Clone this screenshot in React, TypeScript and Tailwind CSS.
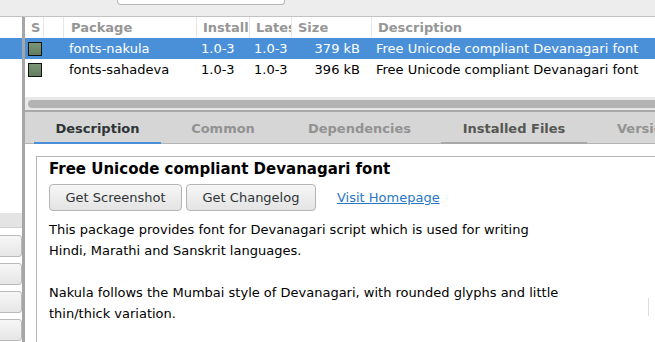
import React from 'react';

interface PkgRow {
  name: string;
  installed: string;
  latest: string;
  size: string;
  summary: string;
  selected?: boolean;
}

const rows: PkgRow[] = [
  { name: 'fonts-nakula', installed: '1.0-3', latest: '1.0-3', size: '379 kB', summary: 'Free Unicode compliant Devanagari font', selected: true },
  { name: 'fonts-sahadeva', installed: '1.0-3', latest: '1.0-3', size: '396 kB', summary: 'Free Unicode compliant Devanagari font' },
];

// column widths, left to right (S, blank, Package, Installed, Latest, Size, Description)
const Header = () => (
  <div className="flex h-[21px] text-[13px] font-bold text-[#969696] leading-[21px] shrink-0">
    <div className="w-[19px] pl-[6px] border-r border-[#e6e6e6] overflow-hidden whitespace-nowrap">S</div>
    <div className="w-[20px] border-r border-[#e6e6e6]" />
    <div className="w-[133px] pl-[7px] border-r border-[#e6e6e6] overflow-hidden whitespace-nowrap">Package</div>
    <div className="w-[53px] pl-[6px] border-r border-[#e6e6e6] overflow-hidden whitespace-nowrap">Installed</div>
    <div className="w-[42px] pl-[6px] border-r border-[#e6e6e6] overflow-hidden whitespace-nowrap">Latest</div>
    <div className="w-[80px] pl-[6px] border-r border-[#e6e6e6] overflow-hidden whitespace-nowrap">Size</div>
    <div className="flex-1 pl-[6px] overflow-hidden whitespace-nowrap">Description</div>
  </div>
);

const Row = ({ row }: { row: PkgRow }) => (
  <div
    className={`flex h-[21px] text-[13px] leading-[21px] whitespace-nowrap shrink-0 ${
      row.selected ? 'bg-[#4a90d9] text-white' : 'text-black'
    }`}
  >
    <div className="w-[19px] flex items-center justify-center">
      <div className="w-[14px] h-[14px] border border-[#111] bg-gradient-to-b from-[#7a9676] to-[#627e5e]" />
    </div>
    <div className="w-[20px]" />
    <div className="w-[133px] pl-[5px] overflow-hidden">{row.name}</div>
    <div className="w-[53px] pl-[4px] overflow-hidden">{row.installed}</div>
    <div className="w-[42px] pl-[4px] overflow-hidden">{row.latest}</div>
    <div className="w-[80px] pr-[12px] text-right overflow-hidden">{row.size}</div>
    <div className="flex-1 pl-[4px] overflow-hidden">{row.summary}</div>
  </div>
);

const tabs = [
  { label: 'Description', w: 'w-[127px] justify-center', state: 'active' },
  { label: 'Common', w: 'w-[110px] justify-center', state: 'dim' },
  { label: 'Dependencies', w: 'w-[149px] justify-center', state: 'dim' },
  { label: 'Installed Files', w: 'w-[146px] justify-center', state: 'hover' },
  { label: 'Version', w: 'w-[140px] justify-start pl-[23px]', state: 'dim' },
];

const GtkButton = ({ label, w }: { label: string; w: string }) => (
  <button
    type="button"
    className={`${w} h-[27px] rounded-[4px] border border-[#b4b4b4] bg-gradient-to-b from-[#f6f6f6] to-[#e4e4e4] text-[13px] text-[#2e3436] shrink-0`}
  >
    {label}
  </button>
);

export default function App() {
  return (
    <div className="w-[655px] h-[342px] bg-[#ededed] overflow-hidden flex flex-col font-['DejaVu_Sans',sans-serif]">
      {/* toolbar with the bottom of the search entry */}
      <div className="h-[16px] shrink-0">
        <div className="ml-[117px] w-[168px] h-[5px] bg-white border border-t-0 border-[#b6b6b6] rounded-b-[4px]" />
      </div>
      <div className="h-px bg-[#c2c2c2] shrink-0" />

      <div className="flex flex-1 min-h-0">
        {/* left sidebar, mostly cut off */}
        <div className="w-[22px] flex flex-col bg-white shrink-0">
          <div className="h-[21px]" />
          <div className="h-[21px] bg-[#4a90d9]" />
          <div className="h-[154px]" />
          <div className="h-[15px] bg-[#e4e4e4] border-b border-[#cfcfcf]" />
          <div className="flex flex-col gap-[6px] mt-[7px]">
            {[0, 1, 2, 3].map((i) => (
              <div
                key={i}
                className="-ml-[12px] w-[34px] h-[22px] rounded-[3px] border border-[#bababa] bg-gradient-to-b from-[#f7f7f7] to-[#e6e6e6]"
              />
            ))}
          </div>
        </div>

        {/* pane handle */}
        <div className="w-[3px] bg-[#a6a6a6] shrink-0" />

        {/* main pane */}
        <div className="flex-1 flex flex-col min-w-0">
          <div className="h-[80px] bg-white flex flex-col shrink-0">
            <Header />
            {rows.map((r) => (
              <Row key={r.name} row={r} />
            ))}
          </div>

          {/* horizontal scrollbar */}
          <div className="h-[13px] bg-[#e8e8e8] pt-[3px] pl-[3px] shrink-0">
            <div className="h-[8px] rounded-l-full bg-[#b3b3b3]" />
          </div>
          <div className="h-[2px] bg-[#a9a9a9] shrink-0" />

          {/* notebook tabs */}
          <div className="h-[32px] bg-[#d6d6d6] border-b border-[#b5b5b5] flex gap-[7px] pl-[9px] shrink-0">
            {tabs.map((t) => (
              <div
                key={t.label}
                className={`${t.w} shrink-0 flex items-center pt-[3px] text-[13px] font-bold whitespace-nowrap border-b-2 -mb-px ${
                  t.state === 'active'
                    ? 'border-[#4a90d9] text-[#2e3436]'
                    : t.state === 'hover'
                    ? 'border-[#a8a8a8] text-[#555753]'
                    : 'border-transparent text-[#929292]'
                }`}
              >
                {t.label}
              </div>
            ))}
          </div>

          {/* description page */}
          <div className="flex-1 bg-white pl-[11px] pt-[12px] flex flex-col min-h-0">
            <div className="flex-1 border-l border-t border-[#b6b6b6] pl-[12px] flex flex-col relative">
              <div className="mt-[2px] h-[20px] leading-[20px] text-[15px] font-bold text-black whitespace-nowrap">
                Free Unicode compliant Devanagari font
              </div>
              <div className="flex items-center gap-[4px] mt-[5px]">
                <GtkButton label="Get Screenshot" w="w-[133px]" />
                <GtkButton label="Get Changelog" w="w-[130px]" />
                <a href="#" className="ml-[17px] text-[13px] text-[#2a76c6] underline whitespace-nowrap">
                  Visit Homepage
                </a>
              </div>
              <div className="mt-[8px] text-[13px] leading-[21px] text-black whitespace-nowrap">
                <p>This package provides font for Devanagari script which is used for writing</p>
                <p>Hindi, Marathi and Sanskrit languages.</p>
                <p>&nbsp;</p>
                <p>Nakula follows the Mumbai style of Devanagari, with rounded glyphs and little</p>
                <p>thin/thick variation.</p>
              </div>
              {/* overlay scrollbar indicator */}
              <div className="absolute left-[611px] top-[141px] w-px h-[18px] bg-[#dcdcdc]" />
            </div>
          </div>
        </div>
      </div>
    </div>
  );
}
